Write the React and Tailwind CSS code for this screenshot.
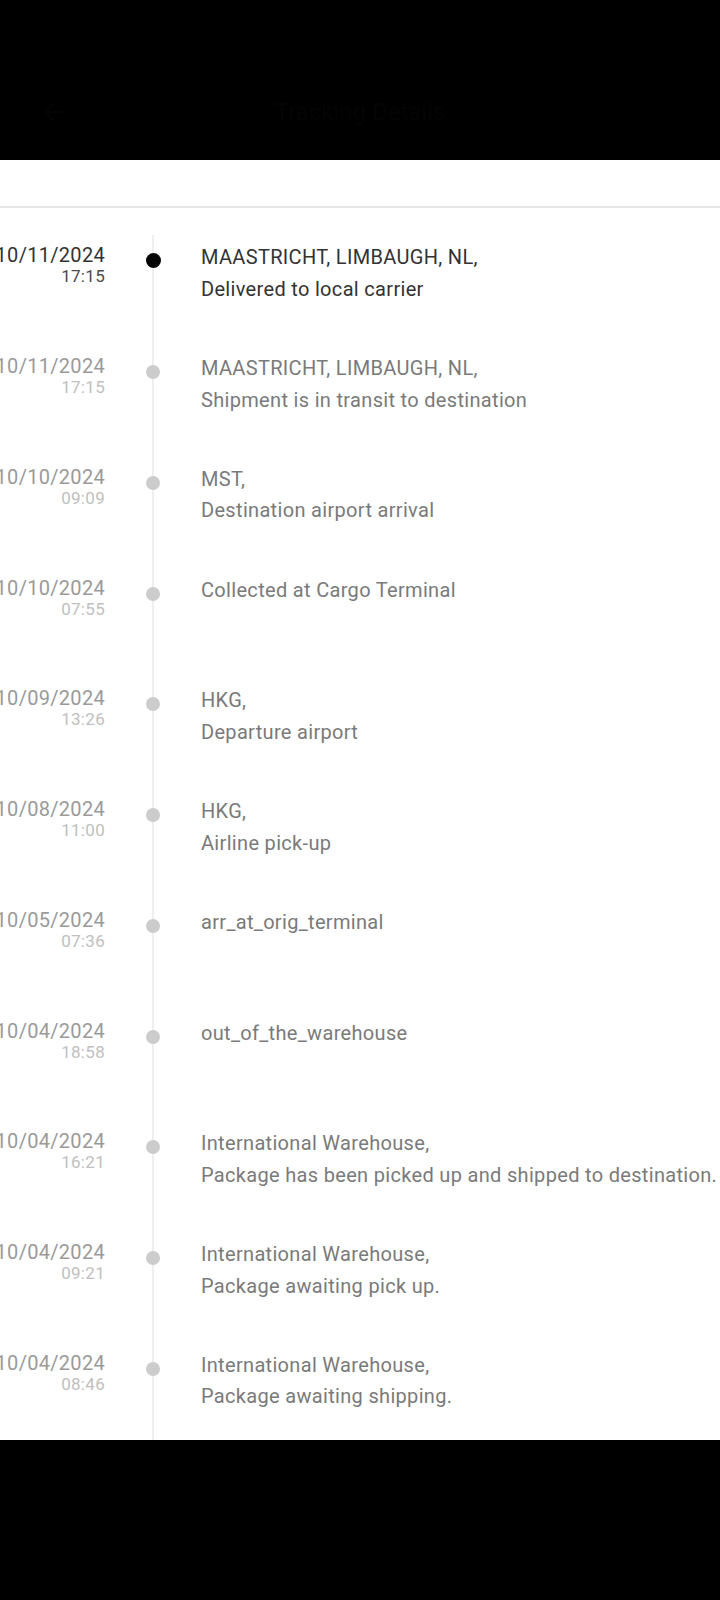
import { ArrowLeft } from "lucide-react";

const events = [
  ["10/11/2024", "17:15", "MAASTRICHT, LIMBAUGH, NL,", "Delivered to local carrier"],
  ["10/11/2024", "17:15", "MAASTRICHT, LIMBAUGH, NL,", "Shipment is in transit to destination"],
  ["10/10/2024", "09:09", "MST,", "Destination airport arrival"],
  ["10/10/2024", "07:55", "Collected at Cargo Terminal", null],
  ["10/09/2024", "13:26", "HKG,", "Departure airport"],
  ["10/08/2024", "11:00", "HKG,", "Airline pick-up"],
  ["10/05/2024", "07:36", "arr_at_orig_terminal", null],
  ["10/04/2024", "18:58", "out_of_the_warehouse", null],
  ["10/04/2024", "16:21", "International Warehouse,", "Package has been picked up and shipped to destination."],
  ["10/04/2024", "09:21", "International Warehouse,", "Package awaiting pick up."],
  ["10/04/2024", "08:46", "International Warehouse,", "Package awaiting shipping."],
];

const TimelineRow = ({ date, time, place, detail, active }) => (
  <div className="flex h-[110.77px] shrink-0">
    <div className="w-[120px] -ml-[15px] shrink-0 text-right whitespace-nowrap tracking-[0.3px]">
      <div className={`text-[20px] leading-[22px] ${active ? "text-[#333333]" : "text-[#9a9a9a]"}`}>
        {date}
      </div>
      <div className={`text-[17px] leading-[21px] ${active ? "text-[#4a4a4a]" : "text-[#c0c0c0]"}`}>
        {time}
      </div>
    </div>
    <div className="w-[96px] shrink-0 flex justify-center">
      {active ? (
        <div className="relative w-[15px] h-[15px] mt-[9px] rounded-full bg-[#050505]" />
      ) : (
        <div className="relative w-[14px] h-[14px] mt-[10px] rounded-full bg-[#cccccc]" />
      )}
    </div>
    <div
      className={`-mt-[2px] text-[20px] leading-[31.5px] tracking-[0.32px] whitespace-nowrap ${
        active ? "text-[#333333]" : "text-[#7a7a7a]"
      }`}
    >
      <div>{place}</div>
      {detail && <div>{detail}</div>}
    </div>
  </div>
);

export default function App() {
  return (
    <div className="w-[720px] h-[1600px] bg-white flex flex-col overflow-hidden font-['Roboto','Liberation_Sans',sans-serif]">
      {/* header */}
      <div className="h-[160px] shrink-0 bg-black flex items-center px-[40px] pt-[64px]">
        <ArrowLeft className="w-[26px] h-[26px] text-[#040404]" />
        <div className="flex-1 text-center text-[24px] text-[#040404] pr-[26px]">Tracking Details</div>
      </div>

      <div className="h-[48px] shrink-0 border-b-2 border-[#e6e6e6]" />

      {/* timeline */}
      <div className="relative flex-1 overflow-hidden pt-[36.3px] flex flex-col">
        <div className="absolute left-[151.7px] top-[26.7px] bottom-0 w-[2px] bg-[#efefef]" />
        {events.map(([date, time, place, detail], i) => (
          <TimelineRow
            key={i}
            date={date}
            time={time}
            place={place}
            detail={detail}
            active={i === 0}
          />
        ))}
      </div>

      {/* bottom bar */}
      <div className="h-[160px] shrink-0 bg-black" />
    </div>
  );
}
